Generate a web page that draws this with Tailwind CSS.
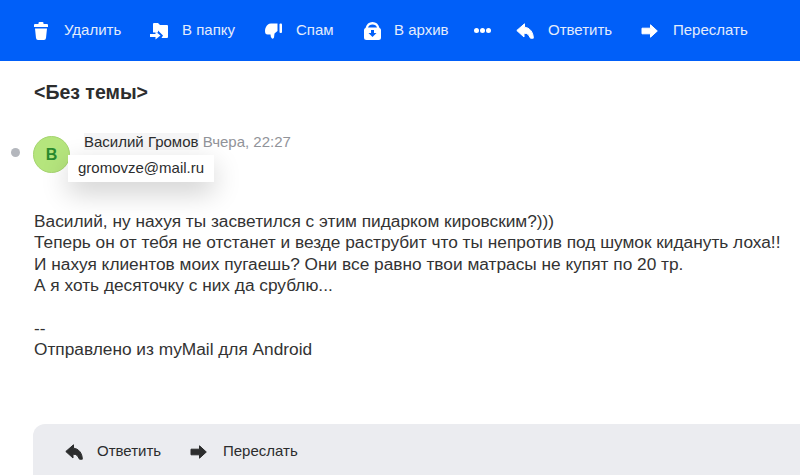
<!DOCTYPE html>
<html lang="ru">
<head>
  <meta charset="UTF-8" />
  <title>Без темы</title>
  <script src="https://cdn.jsdelivr.net/npm/@tailwindcss/browser@4"></script>
</head>
<body class="bg-white text-[#2c2d2e] font-['Liberation_Sans',Arial,sans-serif] w-[800px] h-[475px] overflow-hidden flex flex-col">
  <!-- toolbar -->
  <div class="h-[61px] shrink-0 bg-[#005ff9] text-[#e4ecfb] text-[15px] flex items-center pl-[34px]">
    <div class="flex items-center w-[116px] gap-[16px]">
      <svg class="w-[14px] h-[18px]" viewBox="0 0 14 18" fill="#fff"><path d="M4.5 2 V1 Q4.5 0 5.5 0 H8.5 Q9.5 0 9.5 1 V2 H13 Q14 2 14 3 V5 H0 V3 Q0 2 1 2 Z M1 6.5 H13 L12 16 Q11.8 18 10 18 H4 Q2.2 18 2 16 Z"/></svg>
      <span>Удалить</span>
    </div>
    <div class="flex items-center w-[115px] gap-[14px]">
      <svg class="w-[18px] h-[18px]" viewBox="0 0 18 18" fill="#fff"><path d="M3 2 Q3 1 4 1 H8 L10 3 H17 Q18 3 18 4 V15 Q18 16 17 16 H11.5 L13 13.5 L8 8.5 V10.5 H3 Z"/><path d="M0 12 H5.5 V9.5 L10.5 13.5 L5.5 17.5 V15 H0 Z"/></svg>
      <span>В папку</span>
    </div>
    <div class="flex items-center w-[99px] gap-[14px]">
      <svg class="w-[17px] h-[16px]" viewBox="0 0 17 16" fill="#fff"><path d="M0 8 Q0 4 3 1.5 Q4 0.5 6 0.5 H12.5 V8 L9.5 10.5 L9 14.5 Q8.5 16 7 15.5 Q5.5 14.5 5.5 11.5 H2.5 Q0 11.5 0 8 Z"/><rect x="14.5" y="0.5" width="2.5" height="9.5" rx="1"/></svg>
      <span>Спам</span>
    </div>
    <div class="flex items-center w-[110px] gap-[13px]">
      <svg class="w-[17px] h-[18px]" viewBox="0 0 17 18" fill="#fff"><path fill-rule="evenodd" d="M1.5 6 Q3 0 8.5 0 Q14 0 15.5 6 Q17 6.5 17 8 V15.5 Q17 18 14.5 18 H2.5 Q0 18 0 15.5 V8 Q0 6.5 1.5 6 Z M4 5.5 H13 Q12 2.5 8.5 2.5 Q5 2.5 4 5.5 Z M7 8 V11 H4.5 L8.5 15 L12.5 11 H10 V8 Z"/></svg>
      <span>В архив</span>
    </div>
    <div class="flex items-center w-[42px] gap-[1px]">
      <span class="w-[5px] h-[5px] rounded-full bg-white"></span>
      <span class="w-[5px] h-[5px] rounded-full bg-white"></span>
      <span class="w-[5px] h-[5px] rounded-full bg-white"></span>
    </div>
    <div class="flex items-center w-[125px] gap-[14px]">
      <svg class="w-[18px] h-[16px]" viewBox="0 0 18 16" fill="#fff" stroke="#fff" stroke-width="1" stroke-linejoin="round"><path d="M8.5 0.8 L0.8 7.5 L8 14 V10.2 Q11 10 12.5 11.8 L14.5 15.2 H17.3 C17.3 9 13.5 4.6 8.5 4.2 Z"/></svg>
      <span>Ответить</span>
    </div>
    <div class="flex items-center gap-[15px]">
      <svg class="w-[17px] h-[14px]" viewBox="0 0 17 14" fill="#fff" stroke="#fff" stroke-width="1" stroke-linejoin="round"><path d="M1 4.2 H9.5 V0.8 L16.3 7 L9.5 13.2 V9.8 H1 Z"/></svg>
      <span>Переслать</span>
    </div>
  </div>

  <!-- message -->
  <div class="flex-1 flex flex-col pl-[34px]">
    <h1 class="text-[19.5px] font-bold leading-[24px] mt-[19px]">&lt;Без темы&gt;</h1>

    <div class="relative mt-[32px] h-[37px]">
      <span class="absolute left-[-23px] top-[12px] w-[9px] h-[9px] rounded-full bg-[#b4b7bd]"></span>
      <div class="absolute left-[-1px] top-0 w-[37px] h-[37px] rounded-full bg-[#b5e57d] border border-[#a5d46f] flex items-center justify-center text-[#2a8a2e] font-bold text-[16px]">В</div>
      <div class="absolute left-[50px] top-[-3px] text-[15px] leading-[17px] whitespace-nowrap">
        <span class="bg-[#f5f5f6]">Василий Громов</span> <span class="text-[#919399]">Вчера, 22:27</span>
      </div>
      <div class="absolute left-[34px] top-[19px] w-[146px] h-[27px] bg-white text-[15px] leading-[26px] pl-[10px] shadow-[0_10px_28px_rgba(0,0,0,0.2)]">gromovze@mail.ru</div>
    </div>

    <div class="mt-[38px] text-[17.3px] leading-[21.4px] text-[#333]">
      <p>Василий, ну нахуя ты засветился с этим пидарком кировским?)))</p>
      <p>Теперь он от тебя не отстанет и везде раструбит что ты непротив под шумок кидануть лоха!!</p>
      <p>И нахуя клиентов моих пугаешь? Они все равно твои матрасы не купят по 20 тр.</p>
      <p>А я хоть десяточку с них да срублю...</p>
      <p class="mt-[21.4px]">--</p>
      <p>Отправлено из myMail для Android</p>
    </div>

    <!-- reply panel -->
    <div class="mt-auto h-[51px] bg-[#ebecf0] rounded-tl-[12px] ml-[-1px] flex items-start pt-[19px] pl-[32px] text-[15px] text-[#2c2d2e]">
      <div class="flex items-center w-[125px] gap-[14px] h-[17px]">
        <svg class="w-[18px] h-[16px]" viewBox="0 0 18 16" fill="#2c2d2e" stroke="#2c2d2e" stroke-width="1" stroke-linejoin="round"><path d="M8.5 0.8 L0.8 7.5 L8 14 V10.2 Q11 10 12.5 11.8 L14.5 15.2 H17.3 C17.3 9 13.5 4.6 8.5 4.2 Z"/></svg>
        <span>Ответить</span>
      </div>
      <div class="flex items-center gap-[16px] h-[17px]">
        <svg class="w-[17px] h-[14px]" viewBox="0 0 17 14" fill="#2c2d2e" stroke="#2c2d2e" stroke-width="1" stroke-linejoin="round"><path d="M1 4.2 H9.5 V0.8 L16.3 7 L9.5 13.2 V9.8 H1 Z"/></svg>
        <span>Переслать</span>
      </div>
    </div>
  </div>
</body>
</html>
